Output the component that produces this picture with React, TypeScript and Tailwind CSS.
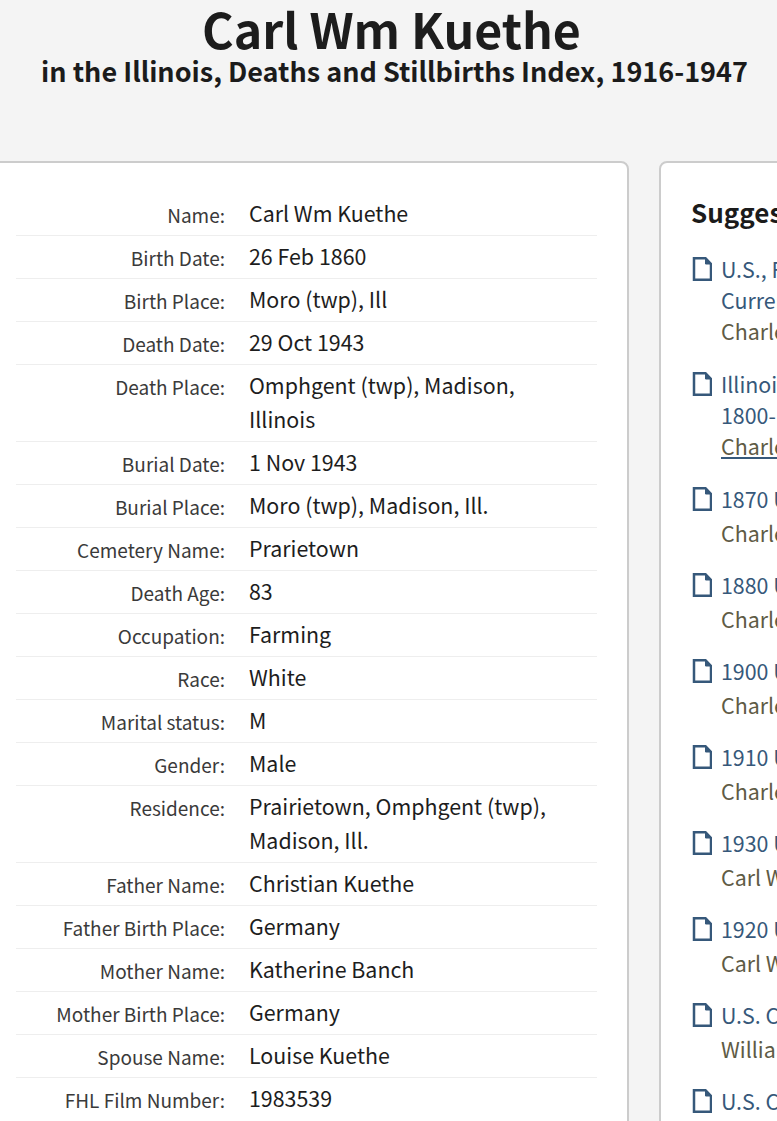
import React from 'react';

const rows: [string, string[]][] = [
  ['Name:', ['Carl Wm Kuethe']],
  ['Birth Date:', ['26 Feb 1860']],
  ['Birth Place:', ['Moro (twp), Ill']],
  ['Death Date:', ['29 Oct 1943']],
  ['Death Place:', ['Omphgent (twp), Madison,', 'Illinois']],
  ['Burial Date:', ['1 Nov 1943']],
  ['Burial Place:', ['Moro (twp), Madison, Ill.']],
  ['Cemetery Name:', ['Prarietown']],
  ['Death Age:', ['83']],
  ['Occupation:', ['Farming']],
  ['Race:', ['White']],
  ['Marital status:', ['M']],
  ['Gender:', ['Male']],
  ['Residence:', ['Prairietown, Omphgent (twp),', 'Madison, Ill.']],
  ['Father Name:', ['Christian Kuethe']],
  ['Father Birth Place:', ['Germany']],
  ['Mother Name:', ['Katherine Banch']],
  ['Mother Birth Place:', ['Germany']],
  ['Spouse Name:', ['Louise Kuethe']],
  ['FHL Film Number:', ['1983539']],
];

const suggested: { title: string[]; person: string; link?: boolean }[] = [
  { title: ['U.S., Find a Grave Index', 'Current'], person: 'Charles Kuethe' },
  { title: ['Illinois, Compiled Index,', '1800-1900'], person: 'Charles Kuethe', link: true },
  { title: ['1870 United States Census'], person: 'Charles Kuethe' },
  { title: ['1880 United States Census'], person: 'Charles Kuethe' },
  { title: ['1900 United States Census'], person: 'Charles Kuethe' },
  { title: ['1910 United States Census'], person: 'Charles Kuethe' },
  { title: ['1930 United States Census'], person: 'Carl W Kuethe' },
  { title: ['1920 United States Census'], person: 'Carl W Kuethe' },
  { title: ['U.S. City Directories'], person: 'William Kuethe' },
  { title: ['U.S. City Directories'], person: 'William Kuethe' },
];

function PageIcon() {
  return (
    <svg width="21" height="24" viewBox="0 0 21 24" fill="none" className="absolute left-0 top-[4px]">
      <path d="M3 1.25H14.5L20 7V22.75H3Z" stroke="#36587a" strokeWidth="2.5" strokeLinejoin="miter" />
      <path d="M14.5 1.25V7H20Z" fill="#36587a" stroke="#36587a" strokeWidth="1" />
    </svg>
  );
}

export default function App() {
  return (
    <div
      className="h-[1121px] w-[777px] overflow-hidden bg-[#f4f4f4] text-[#1b1b1b]"
      style={{ fontFamily: '"Noto Sans CJK SC", "Noto Sans", sans-serif' }}
    >
      <header className="h-[161px] text-center">
        <h1 className="pl-[6px] text-[48.25px] leading-[56px] font-bold text-[#1c1c1c]">Carl Wm Kuethe</h1>
        <h2 className="pl-[12px] text-[27px] leading-[30px] font-bold">
          in the Illinois, Deaths and Stillbirths Index, 1916-1947
        </h2>
      </header>

      <div className="flex items-start gap-[30px]">
        {/* main record card runs off the left edge */}
        <div className="ml-[-20px] h-[1100px] w-[649px] shrink-0 rounded-[8px] border-2 border-[#cccccc] bg-white pt-[30px] pr-[30px] pl-[34px]">
          {rows.map(([label, value]) => (
            <div key={label} className="flex items-start border-b border-[#eeeeee] py-[4px] last:border-b-0">
              <div className="mt-[5px] w-[209px] shrink-0 text-right text-[19px] leading-[26px] text-[#3a3a3a]">{label}</div>
              <div className="mt-[-1px] mb-[1px] pl-[24px] text-[21.4px] leading-[34px] text-[#1d1d1d]">
                {value.map(line => (
                  <div key={line}>{line}</div>
                ))}
              </div>
            </div>
          ))}
        </div>

        <div className="h-[1100px] w-[400px] shrink-0 rounded-[8px] border-2 border-[#cccccc] bg-white pt-[31px] pl-[30px]">
          <h3 className="text-[26px] leading-[36px] font-bold whitespace-nowrap">Suggested Records</h3>
          <ul className="mt-[23px] flex flex-col gap-[21px] whitespace-nowrap">
            {suggested.map((item, i) => (
              <li key={i} className={item.title.length > 1 ? 'relative mb-[1px] pl-[30px] text-[21.4px] leading-[31px]' : 'relative pl-[30px] text-[21.4px] leading-[31px]'}>
                <PageIcon />
                <div className="text-[#36587a]">
                  {item.title.map(line => (
                    <div key={line}>{line}</div>
                  ))}
                </div>
                <div
                  className={
                    item.link
                      ? 'text-[#5e5b45] underline decoration-[#36587a] underline-offset-2'
                      : item.title.length > 1
                        ? 'text-[#5e5b45]'
                        : 'mt-[3px] text-[#5e5b45]'
                  }
                >
                  {item.person}
                </div>
              </li>
            ))}
          </ul>
        </div>
      </div>
    </div>
  );
}
